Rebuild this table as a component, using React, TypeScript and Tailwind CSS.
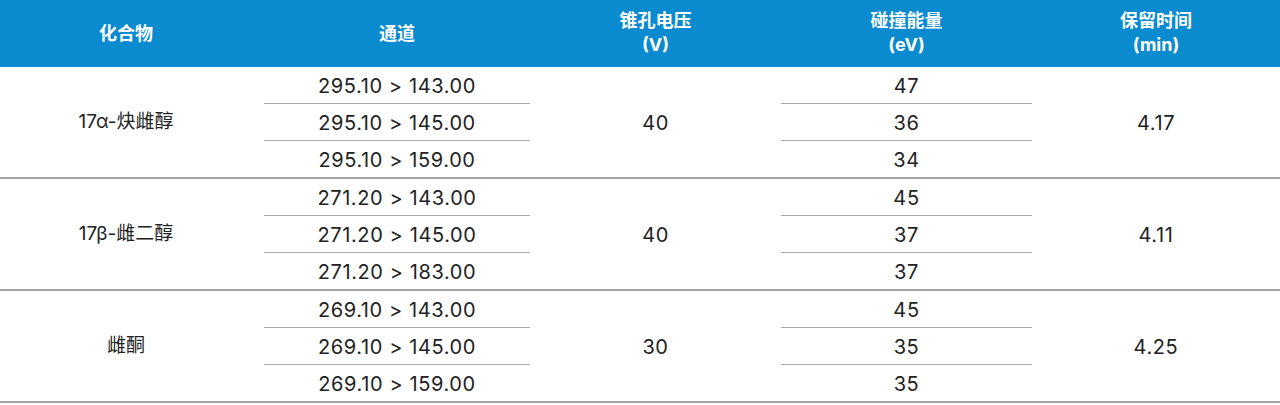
import React from "react";

type Group = {
  name: string;
  channels: string[];
  cone: string;
  energies: string[];
  rt: string;
};

const groups: Group[] = [
  {
    name: "17α-炔雌醇",
    channels: ["295.10 > 143.00", "295.10 > 145.00", "295.10 > 159.00"],
    cone: "40",
    energies: ["47", "36", "34"],
    rt: "4.17",
  },
  {
    name: "17β-雌二醇",
    channels: ["271.20 > 143.00", "271.20 > 145.00", "271.20 > 183.00"],
    cone: "40",
    energies: ["45", "37", "37"],
    rt: "4.11",
  },
  {
    name: "雌酮",
    channels: ["269.10 > 143.00", "269.10 > 145.00", "269.10 > 159.00"],
    cone: "30",
    energies: ["45", "35", "35"],
    rt: "4.25",
  },
];

const font = { fontFamily: '"Inter", "Noto Sans CJK SC", sans-serif' };

function Stack({ items }: { items: string[] }) {
  return (
    <div className="flex flex-col">
      {items.map((v, i) => (
        <div
          key={i}
          className={
            "flex items-center justify-center pt-[2px] " +
            (i < items.length - 1 ? "h-[37px] border-b-[1.5px] border-[#a9a9a9]" : "h-[36px]")
          }
        >
          {v}
        </div>
      ))}
    </div>
  );
}

export default function App() {
  return (
    <div className="w-[1280px] h-[405px] bg-white text-[#222] overflow-hidden" style={font}>
      <div className="flex h-[67px] bg-[#0a8bd0] text-white font-bold text-[18px] leading-[24px] text-center">
        <div className="w-[264px] flex items-center justify-center pr-[12px]">化合物</div>
        <div className="w-[266px] flex items-center justify-center">通道</div>
        <div className="w-[251px] flex flex-col items-center justify-center pb-[2px]">
          <span>锥孔电压</span>
          <span>(V)</span>
        </div>
        <div className="w-[251px] flex flex-col items-center justify-center pb-[2px]">
          <span>碰撞能量</span>
          <span>(eV)</span>
        </div>
        <div className="w-[248px] flex flex-col items-center justify-center pb-[2px]">
          <span>保留时间</span>
          <span>(min)</span>
        </div>
      </div>
      {groups.map((g) => (
        <div key={g.name} className="flex border-b-2 border-[#a3a3a3] text-[20px] tracking-[0.03em]">
          <div className="w-[264px] flex items-center justify-center pr-[12px] text-[19px] tracking-normal">{g.name}</div>
          <div className="w-[266px]">
            <Stack items={g.channels} />
          </div>
          <div className="w-[251px] flex items-center justify-center pt-[2px]">{g.cone}</div>
          <div className="w-[251px]">
            <Stack items={g.energies} />
          </div>
          <div className="w-[248px] flex items-center justify-center pt-[2px]">{g.rt}</div>
        </div>
      ))}
    </div>
  );
}
